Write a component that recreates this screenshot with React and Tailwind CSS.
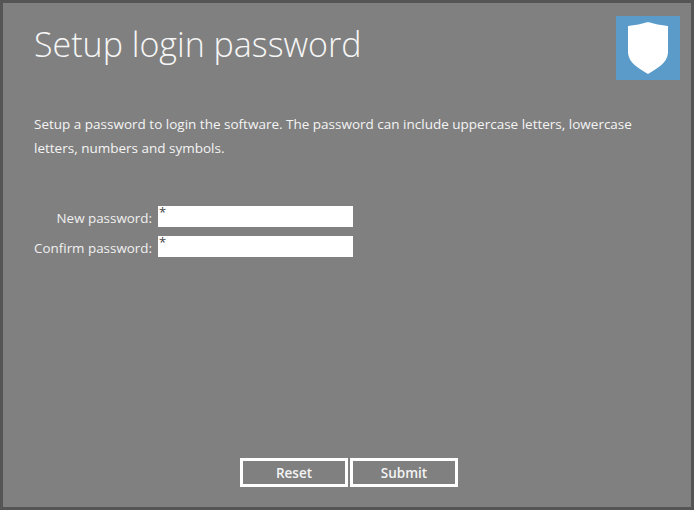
function PasswordRow({ label }) {
    return (
        <div className="flex items-center h-[21px]">
            <label className="w-[118px] pt-[3px] text-right text-[13.4px] text-[#f0f0f0] whitespace-nowrap">{label}</label>
            <div className="ml-[6px] w-[195px] h-[21px] bg-white text-[#444444] text-[13px] leading-[13px] pl-[1px]">*</div>
        </div>
    )
}

function ShieldLogo() {
    return (
        <div className="w-[64px] h-[64px] bg-[#5b9bc9] flex items-center justify-center shrink-0">
            <svg width="40" height="52" viewBox="0 0 40 52">
                <path d="M0 4 C7 3 14 2 20 0 C26 2 33 3 40 4 V31 C39 41 30 46 20 52 C10 46 1 41 0 31 Z" fill="#ffffff" />
            </svg>
        </div>
    )
}

export default function App() {
    return (
        <div className="w-[694px] h-[510px] border-[3px] border-[#555555] bg-[#808080] flex flex-col font-['Open_Sans','Noto_Sans',sans-serif] text-white overflow-hidden">
            <div className="flex justify-between items-start pl-[31px] pr-[11px] pt-[13px]">
                <h1 className="text-[34px] leading-[56px] font-light text-[#f6f6f6]">Setup login password</h1>
                <ShieldLogo />
            </div>
            <p className="ml-[31px] mt-[32px] w-[620px] text-[13.5px] leading-[24px] text-[#f4f4f4]">
                Setup a password to login the software. The password can include uppercase letters, lowercase letters, numbers and symbols.
            </p>
            <div className="ml-[31px] mt-[46px] flex flex-col gap-[9px]">
                <PasswordRow label="New password:" />
                <PasswordRow label="Confirm password:" />
            </div>
            <div className="mt-auto mb-[20px] ml-[237px] flex gap-[2px]">
                <button className="w-[108px] h-[29px] border-[3px] border-white pt-[2px] text-[13.5px] font-semibold text-[#f4f4f4]">Reset</button>
                <button className="w-[108px] h-[29px] border-[3px] border-white pt-[2px] text-[13.5px] font-semibold text-[#f4f4f4]">Submit</button>
            </div>
        </div>
    )
}
